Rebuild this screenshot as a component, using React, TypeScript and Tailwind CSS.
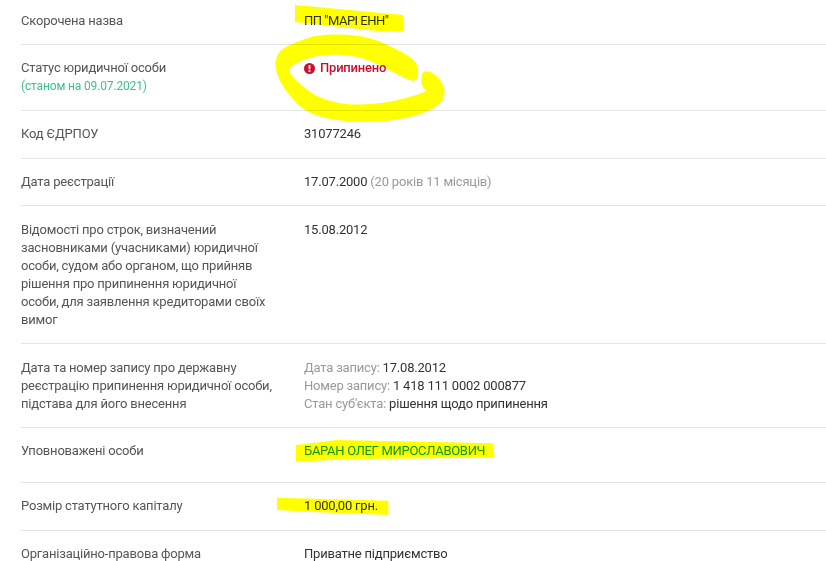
const Row = ({ label, children, className = 'pt-[14px] pb-[15px]' }: { label: React.ReactNode; children?: React.ReactNode; className?: string }) => {
  return (
    <div className={`flex border-b border-[#e5e5e5] ${className}`}>
      <div className="w-[283px] shrink-0 pr-[28px] text-[#555555]">{label}</div>
      <div className="flex-1 text-[#333333]">{children}</div>
    </div>
  );
};

// hand stroke of the marker, traced from the picture
const circlePoints = [
  [442, 150], [442, 98], [380, 60], [300, 25], [220, 15], [140, 18], [80, 38], [25, 65], [18, 110], [30, 150], [60, 195], [110, 245], [190, 268], [300, 275], [420, 262], [510, 225], [525, 180], [505, 145], [480, 127], [457, 127], [457, 170], [480, 183], [420, 205], [330, 225], [230, 228], [150, 208], [90, 170], [45, 118], [80, 95], [130, 75], [220, 68], [310, 90], [415, 148],
];

const smoothPath = (points: number[][]) => {
  const mid = (a: number[], b: number[]) => `${(a[0] + b[0]) / 2} ${(a[1] + b[1]) / 2}`;
  const last = points[points.length - 1];
  let d = `M${mid(last, points[0])}`;
  points.forEach((p, i) => {
    const next = points[(i + 1) % points.length];
    d += ` Q${p[0]} ${p[1]} ${mid(p, next)}`;
  });
  return d + ' Z';
};

const Marks = () => {
  return (
    <svg className="absolute left-0 top-0 mix-blend-multiply pointer-events-none" width="826" height="561" viewBox="0 0 826 561">
      <g fill="#ffff00">
        <polygon points="295,5 403,15 403,31 377,31 295,22" />
        <g transform="translate(285 435) scale(0.3333)">
          <polygon points="33,30 155,15 625,25 628,68 200,72 33,80" />
          <polygon points="-24,188 310,197 310,240 100,232 -24,225" />
        </g>
        <g transform="translate(270 30) scale(0.3333)">
          <path d={smoothPath(circlePoints)} stroke="#ffff00" strokeWidth="6" strokeLinejoin="round" />
        </g>
      </g>
    </svg>
  );
};

const App = () => {
  return (
    <div className="relative h-[561px] w-[826px] overflow-hidden bg-white pl-[21px] font-['Roboto',sans-serif] text-[13px] leading-[18px] tracking-[-0.2px]">
      <div className="-mt-[3px]">
        <Row label="Скорочена назва" className="pt-[15px] pb-[14px]">
          <span className="tracking-[-0.5px]">ПП "МАРІ ЕНН"</span>
        </Row>
        <Row
          label={
            <>
              <p>Статус юридичної особи</p>
              <p className="text-[12px] tracking-[-0.15px] text-[#3cc28a]">(станом на 09.07.2021)</p>
            </>
          }
        >
          <div className="flex items-center gap-[5px] font-medium text-[#c3112f]">
            <svg width="11" height="11" viewBox="0 0 11 11">
              <circle cx="5.5" cy="5.5" r="5.5" fill="#c3112f" />
              <rect x="4.6" y="2.2" width="1.8" height="4" fill="#ffffff" />
              <rect x="4.6" y="7.1" width="1.8" height="1.8" fill="#ffffff" />
            </svg>
            Припинено
          </div>
        </Row>
        <Row label="Код ЄДРПОУ">31077246</Row>
        <Row label="Дата реєстрації" className="pt-[14px] pb-[14px]">
          17.07.2000 <span className="text-[#999999]">(20 років 11 місяців)</span>
        </Row>
        <Row label="Відомості про строк, визначений засновниками (учасниками) юридичної особи, судом або органом, що прийняв рішення про припинення юридичної особи, для заявлення кредиторами своїх вимог" className="pt-[15px] pb-[14px]">
          15.08.2012
        </Row>
        <Row label="Дата та номер запису про державну реєстрацію припинення юридичної особи, підстава для його внесення" className="pt-[15px] pb-[14px]">
          <p><span className="text-[#999999]">Дата запису:</span> 17.08.2012</p>
          <p><span className="text-[#999999]">Номер запису:</span> 1 418 111 0002 000877</p>
          <p><span className="text-[#999999]">Стан суб'єкта:</span> рішення щодо припинення</p>
        </Row>
        <Row label="Уповноважені особи" className="pt-[14px] pb-[22px]">
          <span className="tracking-[-0.3px] text-[#0a9a55]">БАРАН ОЛЕГ МИРОСЛАВОВИЧ</span>
        </Row>
        <Row label="Розмір статутного капіталу">1 000,00 грн.</Row>
        <Row label="Організаційно-правова форма">Приватне підприємство</Row>
      </div>
      <Marks />
    </div>
  );
};

export default App;
